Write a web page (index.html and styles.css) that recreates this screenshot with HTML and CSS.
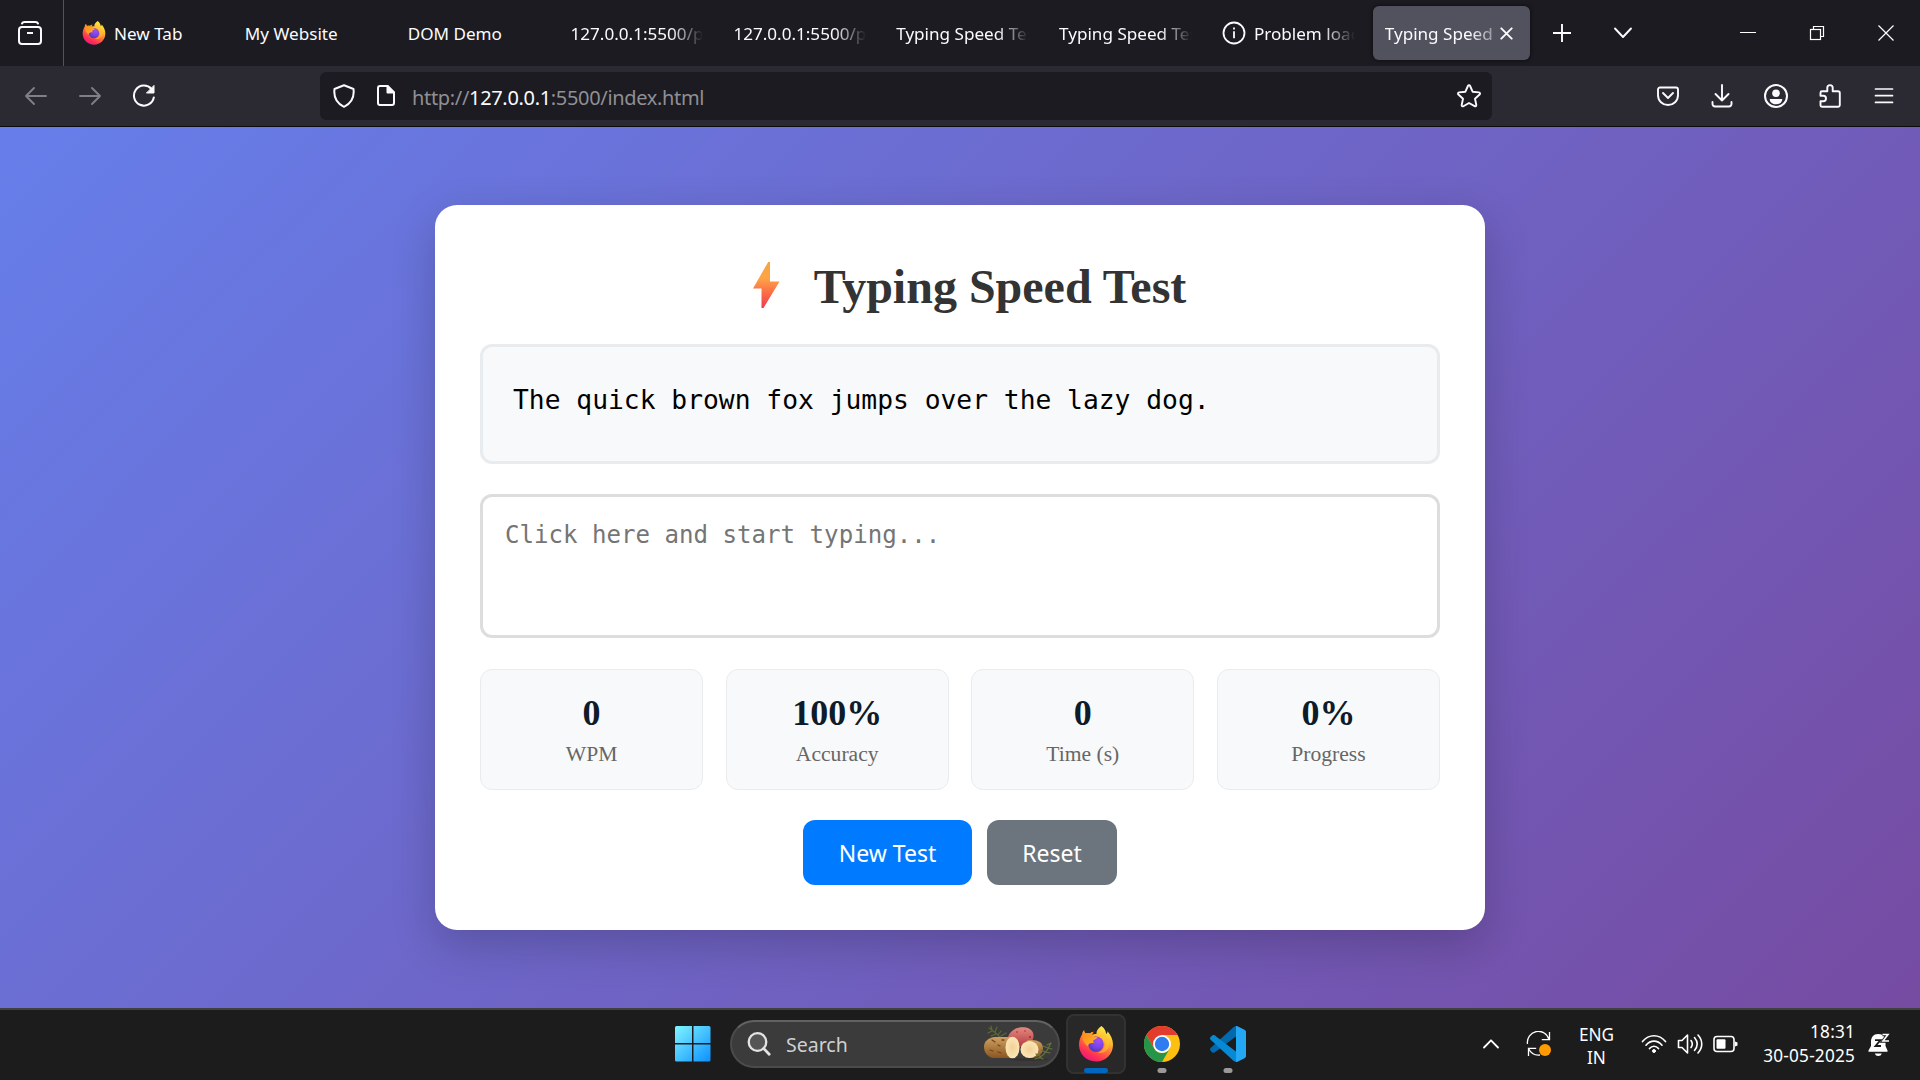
FILE: index.html
```html
<!DOCTYPE html>
<html lang="en">
<head>
<meta charset="utf-8">
<title>Typing Speed Test</title>
<link rel="stylesheet" href="styles.css">
</head>
<body>
<svg class="defs" width="0" height="0" aria-hidden="true">
  <defs>
    <linearGradient id="fxBody" x1=".8" y1="0" x2=".25" y2="1">
      <stop offset="0" stop-color="#fff44f"/><stop offset=".3" stop-color="#ffc02e"/><stop offset=".55" stop-color="#ff7139"/><stop offset=".8" stop-color="#ff2f55"/><stop offset="1" stop-color="#e31587"/>
    </linearGradient>
    <radialGradient id="fxGlobe" cx=".65" cy=".25" r=".8">
      <stop offset="0" stop-color="#a64df5"/><stop offset=".6" stop-color="#7542e5"/><stop offset="1" stop-color="#4a3bb0"/>
    </radialGradient>
    <linearGradient id="fxHead" x1="0" y1="0" x2="1" y2="1">
      <stop offset="0" stop-color="#ff8a16"/><stop offset="1" stop-color="#ffb42e"/>
    </linearGradient>
    <linearGradient id="bolt" x1="0" y1="0" x2="0" y2="1">
      <stop offset="0" stop-color="#f2a540"/><stop offset=".35" stop-color="#ffa445"/><stop offset=".65" stop-color="#fb7048"/><stop offset="1" stop-color="#f03a50"/>
    </linearGradient>
    <linearGradient id="win" gradientUnits="userSpaceOnUse" x1="0" y1="0" x2="36" y2="36">
      <stop offset="0" stop-color="#80f5ff"/><stop offset="1" stop-color="#0a8fff"/>
    </linearGradient>
    <linearGradient id="potato" x1="0" y1="0" x2="0" y2="1">
      <stop offset="0" stop-color="#cfa062"/><stop offset="1" stop-color="#8a5620"/>
    </linearGradient>
    <linearGradient id="redPotato" x1="0" y1="0" x2="0" y2="1">
      <stop offset="0" stop-color="#e58a80"/><stop offset="1" stop-color="#b33a3e"/>
    </linearGradient>
    <radialGradient id="flesh"><stop offset="0" stop-color="#f3cf97"/><stop offset="1" stop-color="#fae6b4"/></radialGradient>
    <symbol id="firefox" viewBox="0 0 34 36">
      <path d="M22.5 0c3.5 2.8 4.3 5.2 4.7 7.9 1-.5 1.4-1.5 1.3-2.6C31.800 9 34 13.600 34 18.800 34 28.500 26.500 35.500 17.200 35.500 7.500 35.500 0 28.200 0 18.800 0 14.500 1.300 11 3.200 8.200c0-1.600.7-3.100 2-4.200.1 1.500.6 2.500 1.500 3.400 1.300-.5 3.200-.5 4.400 0 1-.9 2.100-1.400 3.600-1.600-.9.900-1.500 2-1.600 3.100 1.800-1 3-.9 4.300-.8C17.300 4.800 19 2.200 22.500 0z" fill="url(#fxBody)"/>
      <circle cx="17" cy="18.300" r="7.700" fill="url(#fxGlobe)"/>
      <path d="M3.200 8.200c1.200-.8 2.300-1 3.500-.8 1.500-.5 3.200-.4 4.400 0 1-.9 2.100-1.400 3.600-1.600-.9.900-1.500 2-1.600 3.400 1.300 1.300 3.400 1.800 5.400 1.900-.2 1.600-2 2.200-4.100 3.400-.8.500-.2 1.700 1.400 2.100-2.600.9-6.300-.1-6.800 3.600C5 18 3 13 3.200 8.200z" fill="url(#fxHead)"/>
      <path d="M18.500 9.200c4.200.3 7.500 3.600 7.500 8.700 0 4.400-3.400 8.100-8.200 8.400 6.500 2.700 12-2 12.200-8C30.200 13 26.500 7.500 22.500 6.500c1.500 2 1.500 3 .5 3.700-1.200-.9-2.800-1.200-4.500-1z" fill="#ffc832" opacity=".55"/>
    </symbol>
  </defs>
</svg>

<header class="browser">
  <div class="tabstrip">
    <div class="view-btn">
      <svg width="26" height="26" viewBox="0 0 26 26" fill="none" stroke="#fbfbfe" stroke-width="2" stroke-linecap="round"><rect x="2" y="7" width="22" height="17" rx="3"/><path d="M5 3.500C5.500 2.300 6.300 2 7.500 2h11c1.200 0 2 .3 2.500 1.500"/><path d="M10 13h6" stroke-linecap="butt"/></svg>
    </div>
    <div class="tabs">
      <div class="tab"><svg class="tab-icon" width="24" height="24"><use href="#firefox"/></svg><span class="tab-title">New Tab</span></div>
      <div class="tab"><span class="tab-title">My Website</span></div>
      <div class="tab"><span class="tab-title">DOM Demo</span></div>
      <div class="tab"><span class="tab-title fade">127.0.0.1:5500/pr</span></div>
      <div class="tab"><span class="tab-title fade">127.0.0.1:5500/pr</span></div>
      <div class="tab"><span class="tab-title fade">Typing Speed Test</span></div>
      <div class="tab"><span class="tab-title fade">Typing Speed Test</span></div>
      <div class="tab"><svg class="tab-icon" width="24" height="24" viewBox="0 0 24 24" fill="none" stroke="#fbfbfe" stroke-width="1.8"><circle cx="12" cy="12" r="10.5"/><path d="M12 10.300v7M12 6.500v2"/></svg><span class="tab-title fade">Problem loading</span></div>
      <div class="tab active"><span class="tab-title fade">Typing Speed</span><svg class="tab-close" width="13" height="13" viewBox="0 0 13 13" stroke="#fbfbfe" stroke-width="1.9" stroke-linecap="round"><path d="M1.300 1.300l10.400 10.400M11.700 1.300L1.300 11.700"/></svg></div>
    </div>
    <div class="tab-tools">
      <svg width="20" height="20" viewBox="0 0 20 20" stroke="#fbfbfe" stroke-width="1.9"><path d="M10 1v18M1 10h18"/></svg>
      <svg width="20" height="12" viewBox="0 0 20 12" fill="none" stroke="#fbfbfe" stroke-width="1.9" stroke-linecap="round" stroke-linejoin="round"><path d="M2 1.500l8 8.500 8-8.500"/></svg>
    </div>
    <div class="window-tools">
      <svg width="16" height="16" viewBox="0 0 16 16" stroke="#fff"><path d="M0 7.500h16"/></svg>
      <svg width="16" height="16" viewBox="0 0 16 16" fill="none" stroke="#fff" stroke-width="1.2"><rect x="1.5" y="4.5" width="10" height="10"/><path d="M4.500 4.500v-3h10v10h-3"/></svg>
      <svg width="16" height="16" viewBox="0 0 16 16" stroke="#fff" stroke-width="1.2"><path d="M.5.5l15 15M15.500.5l-15 15"/></svg>
    </div>
  </div>

  <div class="toolbar">
    <div class="nav">
      <svg width="24" height="24" viewBox="0 0 24 24" fill="none" stroke="#807f86" stroke-width="1.9" stroke-linecap="round" stroke-linejoin="round"><path d="M22 12H2M10 4l-8 8 8 8"/></svg>
      <svg width="24" height="24" viewBox="0 0 24 24" fill="none" stroke="#807f86" stroke-width="1.9" stroke-linecap="round" stroke-linejoin="round"><path d="M2 12h20M14 4l8 8-8 8"/></svg>
      <svg width="24" height="24" viewBox="0 0 24 24" fill="none" stroke="#fbfbfe" stroke-width="2" stroke-linecap="round"><path d="M21.800 13.500A10 10 0 1 1 19.500 5"/><path d="M22 1.800V9h-7.200z" fill="#fbfbfe" stroke-width="1" stroke-linejoin="round"/></svg>
    </div>
    <div class="urlbar">
      <svg width="24" height="24" viewBox="0 0 24 24" fill="none" stroke="#fbfbfe" stroke-width="2" stroke-linejoin="round"><path d="M12 1.200L21.500 5c1 8-2.500 14.500-9.500 17.800C5 19.500 1.500 13 2.500 5z"/></svg>
      <svg class="page-icon" width="20" height="24" viewBox="0 0 20 24" fill="none" stroke="#fbfbfe" stroke-width="2" stroke-linejoin="round"><path d="M11.500 2H4a2 2 0 0 0-2 2v15a2 2 0 0 0 2 2h12a2 2 0 0 0 2-2V8.500z"/><path d="M11.500 2v6.500H18z" fill="#fbfbfe"/></svg>
      <span class="url">http://<b>127.0.0.1</b>:5500/index.html</span>
      <svg class="star" width="26" height="26" viewBox="0 0 26 26" fill="none" stroke="#fbfbfe" stroke-width="1.9" stroke-linejoin="round"><path d="M13 2.200c.5 0 .9.300 1.100.8l2.500 5.700 6.300.7c1.200.2 1.500 1.300.7 2.100l-4.600 4.200 1.300 6.300c.2 1.100-.8 1.700-1.700 1.200L13 20l-5.600 3.200c-.9.500-1.900-.1-1.700-1.200L7 15.700l-4.600-4.200c-.8-.8-.5-1.900.7-2.100l6.300-.7L11.900 3c.2-.5.6-.8 1.100-.8z"/></svg>
    </div>
    <div class="actions">
      <svg width="26" height="26" viewBox="0 0 26 26" fill="none" stroke="#fbfbfe" stroke-width="1.9" stroke-linecap="round" stroke-linejoin="round"><path d="M5 4.500h16a2 2 0 0 1 2 2v5.800c0 5.500-4.500 9.700-10 9.700S3 17.800 3 12.300V6.500a2 2 0 0 1 2-2z"/><path d="M8 10l5 5 5-5"/></svg>
      <svg width="26" height="26" viewBox="0 0 26 26" fill="none" stroke="#fbfbfe" stroke-width="1.9" stroke-linecap="round" stroke-linejoin="round"><path d="M13 2v15.500M6.500 11l6.500 6.500 6.500-6.500M3.500 19v2a2.500 2.500 0 0 0 2.500 2.500h14a2.500 2.500 0 0 0 2.500-2.500v-2"/></svg>
      <svg width="26" height="26" viewBox="0 0 26 26" fill="none"><circle cx="13" cy="13" r="11" stroke="#fbfbfe" stroke-width="2"/><circle cx="13" cy="10.2" r="3.8" fill="#fbfbfe"/><path d="M6.800 16h12.400c.3 3-2.700 5.300-6.200 5.300S6.500 19 6.800 16z" fill="#fbfbfe"/></svg>
      <svg width="26" height="26" viewBox="0 0 26 26" fill="none" stroke="#fbfbfe" stroke-width="1.9" stroke-linejoin="round"><path d="M10.300 8.200V4.800a2.700 2.700 0 0 1 5.400 0v3.400h5.300a1.800 1.800 0 0 1 1.800 1.800v12a1.800 1.800 0 0 1-1.800 1.800H5A1.500 1.500 0 0 1 3.500 22.300v-4.100h2.800a2.700 2.700 0 0 0 0-5.400H3.500V9.700A1.500 1.500 0 0 1 5 8.200z"/></svg>
      <svg width="26" height="26" viewBox="0 0 26 26" stroke="#fbfbfe" stroke-width="1.7" stroke-linecap="round"><path d="M4.500 6h17M4.500 12.700h17M4.500 19.400h17"/></svg>
    </div>
  </div>
</header>

<main class="page">
  <section class="card">
    <h1 class="title"><svg class="bolt" width="28" height="48" viewBox="0 0 28 48"><path d="M16.200 1H18v19.500h9.500L11.500 47H9.500V27.500H1z" fill="url(#bolt)"/></svg><span>Typing Speed Test</span></h1>
    <div class="sample">The quick brown fox jumps over the lazy dog.</div>
    <textarea class="entry" placeholder="Click here and start typing..." spellcheck="false"></textarea>
    <div class="stats">
      <div class="stat"><div class="value">0</div><div class="label">WPM</div></div>
      <div class="stat"><div class="value">100%</div><div class="label">Accuracy</div></div>
      <div class="stat"><div class="value">0</div><div class="label">Time (s)</div></div>
      <div class="stat"><div class="value">0%</div><div class="label">Progress</div></div>
    </div>
    <div class="buttons">
      <button class="btn primary">New Test</button>
      <button class="btn secondary">Reset</button>
    </div>
  </section>
</main>

<footer class="taskbar">
  <div class="dock">
    <svg class="start" width="36" height="36" viewBox="0 0 36 36" fill="url(#win)"><path d="M1.500 0H17v17H0V1.500A1.500 1.500 0 0 1 1.500 0zM18.500 0h15.500A1.500 1.500 0 0 1 35.500 1.500V17h-17zM0 18.500h17v17H1.500A1.500 1.500 0 0 1 0 34zM18.500 18.500h17V34a1.500 1.500 0 0 1-1.500 1.500H18.500z"/></svg>
    <div class="search">
      <svg width="24" height="24" viewBox="0 0 24 24" fill="none" stroke="#e4e4e4" stroke-linecap="round"><circle cx="10.5" cy="10" r="8.8" fill="#555" stroke-width="2.3"/><path d="M16.800 16.600l5.400 5.600" stroke-width="2.8"/></svg>
      <span class="search-text">Search</span>
      <svg class="doodle" width="70" height="38" viewBox="0 0 70 38">
        <ellipse cx="45" cy="34.5" rx="20" ry="1.5" fill="#302d29" opacity=".6"/>
        <g stroke="#5b6a32" stroke-width="1.2" stroke-linecap="round" fill="none"><path d="M5 3c5 3 9 7 14 12M8 5L7 1M11 7l2-5M14 10l3-4M8 6L4 8M12 9l-5 2M15 12l-5 2M17 11l5-3"/></g>
        <path d="M24 12C27 4 36 1 42 2.500c9 2 9 10 5 15-5 5-14 6-18 2z" fill="url(#redPotato)"/>
        <path d="M11 12h17c6 1 7 6 7 11s-3 10-7 10H9C3 32 0 27 0 21.500S5 12.500 11 12z" fill="url(#potato)"/>
        <path d="M8 15l3 2M14 20l2 1M6 25l3 1M14 27l3 1M18 15h2" stroke="#71451b" stroke-width="1.3" stroke-linecap="round"/>
        <ellipse cx="28.5" cy="22.5" rx="7" ry="10.8" fill="url(#flesh)"/>
        <path d="M43 15.500c9-1.500 16 1 16 8C59 30 52 33.500 45 33z" fill="url(#potato)"/>
        <ellipse cx="45.500" cy="24.500" rx="9" ry="8.600" fill="url(#flesh)"/>
        <g stroke="#65743b" stroke-width="1.2" stroke-linecap="round" fill="none"><path d="M51 34c7-1 12-7 16-16M67 18l-4 2M64 23l-5-2M64 23l4 1M61 27l-4-2M61 27l5 1M56 31l-4-2M55 32l4 2"/></g>
        <g fill="#8b2c35"><circle cx="33" cy="7" r=".8"/><circle cx="41" cy="6" r=".7"/><circle cx="46" cy="12" r=".9"/></g>
      </svg>
    </div>
    <div class="app current"><svg width="34" height="36"><use href="#firefox"/></svg><i class="mark"></i></div>
    <div class="app">
      <svg width="36" height="36" viewBox="-18 -18 36 36"><circle r="18" fill="#fdbf12"/><path d="M-15.590-9A18 18 0 0 1 15.590-9L0-9-7.800 4.500z" fill="#e33b2e"/><path d="M-15.590-9L-7.800 4.500A9 9 0 0 0 7.800 4.500L0 18A18 18 0 0 1-15.590-9z" fill="#269547"/><circle r="9" fill="#fff"/><circle r="7.2" fill="#2f7bf0"/></svg><i class="mark"></i>
    </div>
    <div class="app">
      <svg width="36" height="36" viewBox="0 0 36 36"><path d="M26.500 0v10L4.500 26.500c-.8.500-1.500.5-2.200-.1L.6 24.700c-.8-.8-.8-1.900 0-2.700L24 .8z" fill="#0269ad"/><path d="M26.500 36V26L4.500 9.300c-.8-.5-1.500-.5-2.200.1L.6 11c-.8.800-.8 1.900 0 2.700L24 35.200z" fill="#078ad5"/><path d="M26 0c.4-.1.700 0 1 .1l7.500 3.600c1 .5 1.500 1.200 1.500 2.200v24.200c0 1-.5 1.700-1.500 2.200L27 35.900c-.3.100-.6.200-1 .1z" fill="#24a8f3"/></svg><i class="mark"></i>
    </div>
  </div>

  <div class="tray">
    <svg class="t-up" width="18" height="12" viewBox="0 0 18 12" fill="none" stroke="#fff" stroke-width="1.8" stroke-linecap="round" stroke-linejoin="round"><path d="M2 9.500L9 2.300l7 7.200"/></svg>
    <svg class="t-sync" width="26" height="26" viewBox="0 0 26 26" fill="none" stroke="#fff" stroke-width="1.3"><path d="M1.500 13A11 11 0 0 1 23 8.500M23.500 1v7.700h-7.700M2.500 25v-7.700h7.700M2.800 18A11 11 0 0 0 14 24"/><circle cx="19" cy="19" r="6" fill="#ff9a00" stroke="none"/></svg>
    <div class="t-lang"><span>ENG</span><span>IN</span></div>
    <div class="t-status">
      <svg width="26" height="20" viewBox="0 0 26 20" fill="none" stroke="#fff" stroke-width="1.7" stroke-linecap="round"><path d="M1.500 7.500C8-.2 18-.2 24.500 7.500M5 11.200c4.600-5.400 11.400-5.400 16 0M8.500 14.500c2.600-3 6.400-3 9 0"/><circle cx="13" cy="17" r="1.5" fill="#fff" stroke-width="1"/></svg>
      <svg width="26" height="22" viewBox="0 0 26 22" fill="none" stroke="#fff" stroke-width="1.6" stroke-linecap="round" stroke-linejoin="round"><path d="M1.500 7.500H5l5.500-5.500v18L5 14.500H1.500zM14 7.500c1.500 2 1.500 5 0 7M17.500 4.500c3.300 4 3.300 9 0 13M21 2c5 5.500 5 12.500 0 18"/></svg>
      <svg width="25" height="18" viewBox="0 0 25 18" fill="none"><rect x="1" y="1.5" width="20" height="15" rx="3" stroke="#fff" stroke-width="1.6"/><rect x="3.5" y="4.3" width="9" height="9.5" rx="1" fill="#fff"/><path d="M22 6.500l2.500 1v3l-2.500 1z" fill="#fff"/></svg>
    </div>
    <div class="t-clock"><span>18:31</span><span>30-05-2025</span></div>
    <svg class="t-bell" width="23" height="25" viewBox="0 0 23 25"><path d="M10 2C5.500 2 3 5.500 3 9.500V14l-2.500 4.500c-.3.800 0 1.300.8 1.300h17.400c.8 0 1.100-.5.8-1.300L17.500 14V6C16 3.500 13.500 2 10 2z" fill="#fff"/><path d="M6.800 21.500h7c-.6 1.700-1.800 2.500-3.500 2.500s-2.900-.8-3.500-2.500z" fill="#fff"/><path d="M7 8.200h5.500L7.500 14H13" fill="none" stroke="#1c1c1c" stroke-width="1.8"/><path d="M14.500 2.500H20l-5 6.500h5.500" fill="none" stroke="#1c1c1c" stroke-width="3.4"/><path d="M14.500 2.500h5.500l-5 6.500h6" fill="none" stroke="#fff" stroke-width="1.6"/></svg>
  </div>
</footer>
</body>
</html>
```

FILE: styles.css
```css
* { box-sizing: border-box; }
html, body { margin: 0; height: 100%; }
body {
  display: flex;
  flex-direction: column;
  height: 1080px;
  overflow: hidden;
  font-family: "Noto Sans", "Open Sans", sans-serif;
}
svg { display: block; flex: none; }
.defs { position: absolute; }

/* Browser chrome */
.browser { height: 127px; flex: none; border-bottom: 1px solid #0c0c0d; background: #2b2a33; }
.tabstrip { display: flex; height: 66px; background: #1c1b22; color: #fbfbfe; }
.view-btn {
  width: 64px;
  padding: 20px 0 0 17px;
  border-right: 1px solid #54535a;
}
.tabs { display: flex; padding: 6px 0 6px 3px; }
.tab {
  display: flex;
  align-items: center;
  width: 156.85px;
  height: 54px;
  margin: 0 3px;
  padding: 0 12px;
  border-radius: 6px;
  font-size: 17.1px;
  white-space: nowrap;
}
.tab-icon { margin-right: 8px; }
.tab-title { flex: 1; min-width: 0; overflow: hidden; line-height: 26px; padding-top: 1px; }
.fade {
  -webkit-mask-image: linear-gradient(to left, transparent, #000 32px);
  mask-image: linear-gradient(to left, transparent, #000 32px);
}
.active { background: #52525e; box-shadow: 0 0 4px rgba(0, 0, 0, .7); }
.active .fade {
  -webkit-mask-image: linear-gradient(to left, rgba(0,0,0,.4), #000 24px);
  mask-image: linear-gradient(to left, rgba(0,0,0,.4), #000 24px);
}
.tab-close { margin: 0 5px 0 7px; }
.tab-tools { display: flex; align-items: center; gap: 41px; margin-left: 19px; }
.window-tools { display: flex; align-items: center; gap: 53px; margin: 0 26px 0 auto; }

.toolbar { display: flex; align-items: center; height: 60px; }
.nav { display: flex; gap: 30px; width: 320px; padding-left: 24px; }
.urlbar {
  display: flex;
  align-items: center;
  width: 1172px;
  height: 48px;
  padding: 0 10px 0 12px;
  border-radius: 6px;
  background: #1c1b22;
}
.page-icon { margin: 0 16px 0 20px; }
.url { font-size: 20px; letter-spacing: -.33px; color: #8f8f94; line-height: 28px; padding-top: 3px; }
.url b { font-weight: 400; color: #fbfbfe; }
.star { margin-left: auto; }
.actions { display: flex; gap: 28px; margin: 0 23px 0 auto; }

/* Typing test page */
.page {
  flex: 1;
  display: flex;
  align-items: center;
  justify-content: center;
  background: linear-gradient(135deg, #667eea 0%, #764ba2 100%);
}
.card {
  width: 1050px;
  padding: 45px;
  border-radius: 22px;
  background: #fff;
  box-shadow: 0 15px 45px rgba(0, 0, 0, .2);
  font-family: "Liberation Serif", "Times New Roman", serif;
}
.title {
  display: flex;
  justify-content: center;
  height: 71px;
  margin: 0 0 23px;
  font-size: 48px;
  line-height: 73px;
  font-weight: 700;
  color: #333;
}
.bolt { margin: 11px 34px 0 18px; }
.sample {
  min-height: 120px;
  margin-bottom: 30px;
  padding: 30px;
  border: 3px solid #e9ecef;
  border-radius: 12px;
  background: #f8f9fa;
  color: #000;
  font: 26.3px/46px "DejaVu Sans Mono", monospace;
}
.entry {
  display: block;
  width: 100%;
  height: 144px;
  margin-bottom: 31px;
  padding: 23px 22px;
  border: 3px solid #ddd;
  border-radius: 12px;
  background: #fff;
  resize: none;
  outline: none;
  font: 24.1px/30px "DejaVu Sans Mono", monospace;
}
.entry::placeholder { color: #757575; opacity: 1; }
.stats { display: grid; grid-template-columns: repeat(4, 1fr); gap: 22.5px; margin-bottom: 30px; }
.stat {
  height: 121px;
  padding-top: 22.5px;
  border: 1px solid #e9ecef;
  border-radius: 12px;
  background: #f8f9fa;
  text-align: center;
}
.value { font-size: 36px; line-height: 41px; font-weight: 700; color: #0d1b2a; }
.label { margin-top: 8.5px; font-size: 21.6px; line-height: 25px; color: #666; }
.buttons { display: flex; justify-content: center; gap: 15px; }
.btn {
  height: 65px;
  padding: 0 30px;
  border: 0;
  border-radius: 12px;
  color: #fff;
  font: 23px "Noto Sans", "Open Sans", sans-serif;
}
.primary { width: 169px; background: #007bff; }
.secondary { width: 130px; background: #6c757d; }

/* Taskbar */
.taskbar {
  display: flex;
  flex: none;
  height: 72px;
  border-top: 2px solid #404040;
  background: #1c1c1c;
  color: #fff;
}
.dock { display: flex; align-items: center; margin: 0 0 2px 675px; }
.search {
  display: flex;
  align-items: center;
  width: 330px;
  height: 48px;
  margin: 0 6px 0 19px;
  padding: 0 4px 0 15px;
  border: 2px solid #4b4b4b;
  border-top-color: #626262;
  border-radius: 24px;
  background: #3b3b3b;
}
.search-text { margin-left: 15px; font-size: 19.5px; line-height: 28px; padding-top: 2px; color: #d0d0d0; }
.doodle { margin: 0 0 0 auto; }
.app {
  position: relative;
  display: flex;
  justify-content: center;
  width: 60px;
  height: 60px;
  margin-right: 6px;
  padding-top: 12px;
}
.current { border: 2px solid #323232; border-radius: 8px; background: #282828; padding-top: 10px; }
.mark {
  position: absolute;
  bottom: 1px;
  left: 50%;
  width: 9px;
  height: 5px;
  border-radius: 3px;
  background: #999;
  transform: translateX(-50%);
}
.current .mark { width: 24px; bottom: -1px; background: #0067c0; }
.tray { display: flex; align-items: center; margin-left: auto; padding: 0 29px 2px 0; font-size: 17.2px; line-height: 23px; }
.t-up { margin-right: 26px; }
.t-sync { margin-right: 27px; }
.t-lang { display: flex; flex-direction: column; align-items: center; width: 35px; margin: 4px 27px 0 0; }
.t-status { display: flex; align-items: center; gap: 10px; margin-right: 24px; }
.t-clock { display: flex; flex-direction: column; align-items: flex-end; width: 93px; margin: 0 13px 0 0; letter-spacing: .2px; line-height: 24px; }
```
